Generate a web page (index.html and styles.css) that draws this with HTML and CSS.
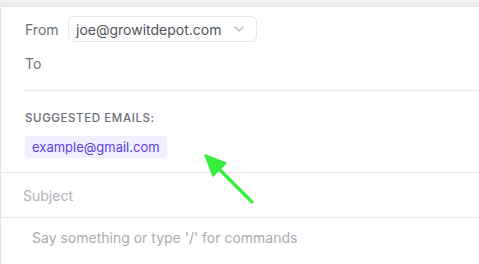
FILE: index.html
```html
<!DOCTYPE html>
<html lang="en">

<head>
    <meta charset="utf-8">
    <meta name="viewport" content="width=device-width, initial-scale=1.0">
    <title>Compose</title>
    <link rel="stylesheet" href="styles.css">
</head>

<body>

    <div class="topbar"></div>

    <section class="compose">

        <!-- afsender / modtager -->
        <div class="adresser">
            <div class="felt fra">
                <span class="etiket">From</span>
                <div class="vaelg">
                    <span>joe@growitdepot.com</span>
                    <svg class="pil-ned" width="10" height="6" viewBox="0 0 10 6">
                        <path d="M1 1l4 4 4-4" fill="none" stroke="#b3b7be" stroke-width="1.2" stroke-linecap="round" stroke-linejoin="round" />
                    </svg>
                </div>
            </div>
            <div class="felt til">
                <span class="etiket">To</span>
            </div>
        </div>

        <!-- forslag -->
        <div class="forslag">
            <p class="forslag-titel">SUGGESTED EMAILS:</p>
            <span class="chip">example@gmail.com</span>
        </div>

        <div class="emne">Subject</div>

        <div class="besked">Say something or type '/' for commands</div>

        <svg class="markering" width="60" height="60" viewBox="0 0 60 60">
            <line x1="51" y1="51" x2="14" y2="14" stroke="#36ee3c" stroke-width="3.2" stroke-linecap="round" />
            <polygon points="4,4 25,12 12,25" fill="#36ee3c" stroke="#36ee3c" stroke-width="1.5" stroke-linejoin="round" />
        </svg>

    </section>

</body>

</html>
```

FILE: styles.css
```css
body {
    margin: 0;
    font-family: Inter, "Liberation Sans", sans-serif;
    background-color: white;
}

.topbar {
    height: 7px;
    background: linear-gradient(#f3f3f3, #e7e7e7);
}

.compose {
    position: relative;
    border-left: 1px solid #e3e3e3;
    height: 257px;
}

/* afsender og modtager */
.adresser {
    margin-left: 24px;
    padding-top: 9px;
    padding-bottom: 17px;
    border-bottom: 1px solid #e8e8e8;
}

.felt {
    display: flex;
    align-items: center;
}

.fra {
    height: 26px;
}

.til {
    margin-top: 11px;
    height: 20px;
}

.etiket {
    font-size: 14px;
    color: #6b7079;
    width: 43px;
}

.vaelg {
    display: flex;
    align-items: center;
    justify-content: space-between;
    box-sizing: border-box;
    width: 189px;
    height: 26px;
    padding: 0 12px 0 7px;
    border: 1px solid #e6e7eb;
    border-radius: 6px;
    font-size: 14px;
    color: #4f535b;
}

/* forslag */
.forslag {
    padding: 20px 24px 14px 24px;
    border-bottom: 1px solid #e8e8e8;
}

.forslag-titel {
    margin: 0 0 11px 0;
    font-size: 11.5px;
    line-height: 14px;
    font-weight: 500;
    letter-spacing: 0.6px;
    color: #6b7079;
}

.chip {
    display: inline-block;
    padding: 0 7px;
    height: 22px;
    line-height: 22px;
    border-radius: 4px;
    background-color: #f1eefd;
    color: #5a3fe0;
    font-size: 13px;
}

.emne {
    height: 44px;
    line-height: 46px;
    padding-left: 22px;
    font-size: 14px;
    color: #b0b3ba;
    border-bottom: 1px solid #e8e8e8;
}

.besked {
    padding: 10px 0 0 31px;
    font-size: 14px;
    line-height: 20px;
    color: #abacaf;
}

/* groen pil */
.markering {
    position: absolute;
    left: 200px;
    top: 144px;
}
```
